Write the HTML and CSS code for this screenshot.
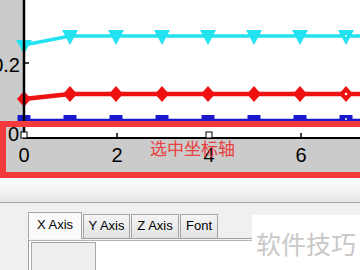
FILE: index.html
```html
<!DOCTYPE html>
<html>
<head>
<meta charset="utf-8">
<link rel="stylesheet" href="styles.css">
</head>
<body>
<div class="chart">
  <svg class="plot" width="360" height="178" viewBox="0 0 360 178" xmlns="http://www.w3.org/2000/svg">
    <rect x="0" y="0" width="360" height="178" fill="#cbcbcb"/>
    <rect x="25" y="0" width="335" height="138" fill="#ffffff"/>
    <!-- cyan series -->
    <polyline points="24,45 70,36 360,36" fill="none" stroke="#22e2f0" stroke-width="3.5"/>
    <g fill="#22e2f0">
      <polygon points="16,40 32,40 24,54"/>
      <polygon points="62,30 78,30 70,45"/>
      <polygon points="108,30 124,30 116,45"/>
      <polygon points="154,30 170,30 162,45"/>
      <polygon points="200,30 216,30 208,45"/>
      <polygon points="246,30 262,30 254,45"/>
      <polygon points="292,30 308,30 300,45"/>
      <polygon points="338,30 354,30 346,45"/>
    </g>
    <circle cx="346" cy="36" r="1" fill="#ffffff"/>
    <!-- red series -->
    <polyline points="24,99 70,94 360,94" fill="none" stroke="#ee1111" stroke-width="4.5"/>
    <g fill="#ee1111">
      <polygon points="24,91 31,99 24,107 17,99"/>
      <polygon points="70,86 77,94 70,102 63,94"/>
      <polygon points="116,86 123,94 116,102 109,94"/>
      <polygon points="162,86 169,94 162,102 155,94"/>
      <polygon points="208,86 215,94 208,102 201,94"/>
      <polygon points="254,86 261,94 254,102 247,94"/>
      <polygon points="300,86 307,94 300,102 293,94"/>
      <polygon points="346,86 353,94 346,102 339,94"/>
    </g>
    <circle cx="346" cy="94" r="1.3" fill="#ffffff"/>
    <!-- blue series -->
    <line x1="24" y1="120" x2="360" y2="120" stroke="#1a1acc" stroke-width="2.5"/>
    <g fill="#1a1acc">
      <rect x="17.5" y="115" width="13" height="12"/>
      <rect x="63.5" y="115" width="13" height="12"/>
      <rect x="109.5" y="115" width="13" height="12"/>
      <rect x="155.5" y="115" width="13" height="12"/>
      <rect x="201.5" y="115" width="13" height="12"/>
      <rect x="247.5" y="115" width="13" height="12"/>
      <rect x="293.5" y="115" width="13" height="12"/>
      <rect x="339.5" y="115" width="13" height="12"/>
    </g>
    <circle cx="346" cy="119" r="1" fill="#ffffff"/>
    <!-- axes -->
    <line x1="24" y1="0" x2="24" y2="139" stroke="#000" stroke-width="2.5"/>
    <line x1="23" y1="138" x2="360" y2="138" stroke="#000" stroke-width="2"/>
    <line x1="24" y1="63" x2="29" y2="63" stroke="#000" stroke-width="1.5"/>
    <line x1="117" y1="133" x2="117" y2="138" stroke="#000" stroke-width="1.5"/>
    <line x1="209" y1="133" x2="209" y2="138" stroke="#000" stroke-width="1.5"/>
    <line x1="301" y1="133" x2="301" y2="138" stroke="#000" stroke-width="1.5"/>
    <rect x="21" y="132" width="6" height="6" fill="#fff" stroke="#000" stroke-width="1"/>
    <rect x="206" y="132" width="6" height="6" fill="#fff" stroke="#000" stroke-width="1"/>
    <g class="tick" font-family="Liberation Sans, Arial, sans-serif" font-size="20" fill="#000">
      <text x="20" y="72" text-anchor="end">0.2</text>
      <text x="19" y="141" text-anchor="end">0</text>
      <text x="24" y="162" text-anchor="middle">0</text>
      <text x="117" y="162" text-anchor="middle">2</text>
      <text x="209" y="162" text-anchor="middle">4</text>
      <text x="301" y="162" text-anchor="middle">6</text>
    </g>
  </svg>
  <div class="mark">选中坐标轴</div>
</div>
<div class="toolbar"></div>
<div class="panel">
  <div class="tabs">
    <div class="tab tab-x active">X Axis</div>
    <div class="tab tab-y">Y Axis</div>
    <div class="tab tab-z">Z Axis</div>
    <div class="tab tab-f">Font</div>
  </div>
  <div class="pane">
    <div class="listbox"></div>
  </div>
</div>
<div class="watermark">软件技巧</div>
</body>
</html>
```
FILE: styles.css
```css
html, body {
  margin: 0;
  padding: 0;
}
body {
  width: 360px;
  height: 270px;
  overflow: hidden;
  background: #f0f0f0;
  position: relative;
  font-family: "Liberation Sans", Arial, sans-serif;
}
.chart {
  position: relative;
  height: 178px;
  overflow: hidden;
}
.plot {
  display: block;
}
.mark {
  position: absolute;
  left: 0;
  top: 121px;
  width: 380px;
  height: 57px;
  box-sizing: border-box;
  border: 6px solid #f23a3c;
  padding: 11px 0 0 144px;
  font-family: "Noto Sans CJK SC", sans-serif;
  font-size: 17px;
  line-height: 20px;
  color: #e8413f;
}
.toolbar {
  height: 24px;
  background: linear-gradient(#f9f3f3 0, #fdfdfd 2px, #f1f1f1 60%, #e6e6e6 100%);
  border-bottom: 1px solid #a6a6a6;
}
.panel {
  padding: 9px 0 0 28px;
  height: 58px;
  box-sizing: border-box;
}
.tabs {
  display: flex;
  align-items: flex-end;
  height: 26px;
  border-bottom: 1px solid #a0a0a0;
}
.tab {
  box-sizing: border-box;
  height: 24px;
  border: 1px solid #a6a6a6;
  border-bottom: none;
  background: linear-gradient(#f4f4f4, #e3e3e3);
  font-size: 13px;
  line-height: 22px;
  color: #000;
  text-align: center;
  margin-left: 1px;
}
.tab.active {
  height: 27px;
  margin-bottom: -1px;
  margin-left: 0;
  background: #fbfbfb;
  line-height: 24px;
}
.tab-x { width: 54px; }
.tab-y { width: 47px; }
.tab-z { width: 48px; }
.tab-f { width: 38px; }
.pane {
  height: 40px;
  background: #ffffff;
  border-left: 1px solid #a0a0a0;
  border-top: 1px solid #f4f4f4;
  box-shadow: inset 0 1px 0 #b4b4b4;
  padding: 2px 0 0 2px;
}
.listbox {
  width: 65px;
  height: 40px;
  box-sizing: border-box;
  background: #eeeeee;
  border: 1px solid #a8a8a8;
}
.watermark {
  position: absolute;
  left: 252px;
  top: 215px;
  right: 0;
  bottom: 0;
  background: #ffffff;
  padding: 14px 0 0 4px;
  font-family: "Noto Sans CJK SC", sans-serif;
  font-size: 25px;
  line-height: 28px;
  color: #c8c8c8;
  white-space: nowrap;
}
```
